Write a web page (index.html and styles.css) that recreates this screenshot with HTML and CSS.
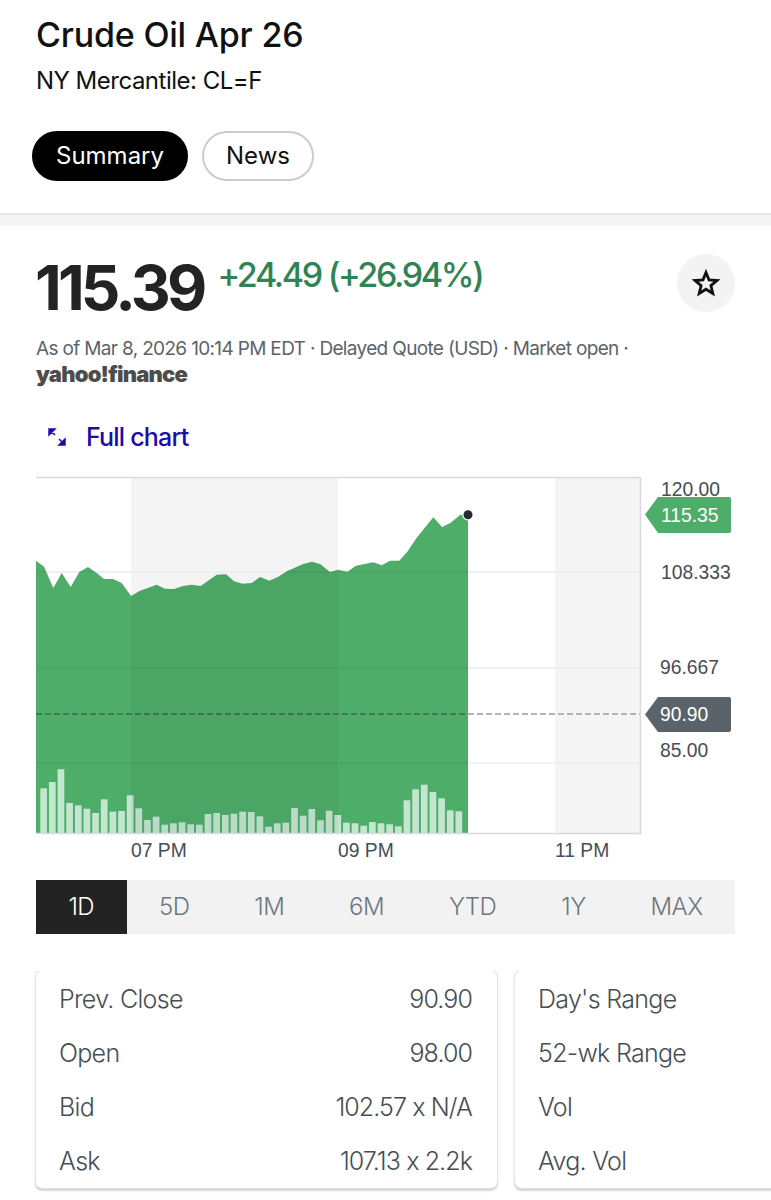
FILE: index.html
```html
<!DOCTYPE html>
<html>
<head>
  <meta charset="UTF-8">
  <title>Crude Oil Apr 26</title>
  <link rel="stylesheet" href="styles.css">
</head>
<body>
  <header class="top">
    <h1>Crude Oil Apr 26</h1>
    <div class="exchange">NY Mercantile: CL=F</div>
    <div class="tabs">
      <span class="tab active">Summary</span>
      <span class="tab">News</span>
    </div>
  </header>

  <main class="quote">
    <div class="price-row">
      <span class="price">115.39</span>
      <span class="change">+24.49 (+26.94%)</span>
      <span class="star">
        <svg width="28" height="28" viewBox="0 0 28 28"><path d="M14 3.500l3 7.400 8 .6-6.100 5.100 1.900 7.800L14 20.200 7.200 24.400l1.900-7.800L3 11.500l8-.6z" fill="none" stroke="#111" stroke-width="2.800"/></svg>
      </span>
    </div>
    <div class="asof">As of Mar 8, 2026 10:14 PM EDT · Delayed Quote (USD) · Market open ·</div>
    <div class="logo">yahoo!finance</div>

    <div class="full-chart">
      <svg width="20" height="20" viewBox="0 0 20 20"><path d="M2 2h6L2 8z M4 4l4 4 M18 18h-6l6-6z M16 16l-4-4" fill="#1d0ca8" stroke="#1d0ca8" stroke-width="1.500"/></svg>
      <span>Full chart</span>
    </div>

    <svg class="chart" width="771" height="400" viewBox="0 465 771 400">
      <defs>
        <clipPath id="areaClip">
          <path d="M36 560.700L44 566.700 53.300 588 61.700 573 70.700 587 79.300 572 88 567 96.700 573 104 579 113 579 121.700 583 131 596 140 590.700 156.700 584.700 165 588.700 174 589 183 586 191.700 584.700 200.700 586 216.700 574.700 226 574.300 234 581.300 242.700 583.700 251.700 583 260 577 269.300 580.700 278.300 576.700 286.700 571.300 303.300 564 312 561.700 320 564 330 572 338.300 569.700 347.300 571.700 356 565.700 373.300 562.300 381.700 565.300 390 560.700 399.300 560.700 407.300 551.700 416.700 537.700 433.300 517.300 442 527 450.700 522.700 460 515 468 514.700V833H36z"/>
        </clipPath>
      </defs>
      <rect x="131" y="478" width="207" height="355" fill="#f4f4f5"/>
      <rect x="555" y="478" width="85" height="355" fill="#f4f4f5"/>
      <g stroke="#ececef" stroke-width="1.500">
        <line x1="36" y1="572" x2="640" y2="572"/>
        <line x1="36" y1="668" x2="640" y2="668"/>
        <line x1="36" y1="763" x2="640" y2="763"/>
      </g>
      <rect x="36" y="478" width="432" height="355" fill="#4fad6a" clip-path="url(#areaClip)"/>
      <g stroke="#000" stroke-opacity=".05" stroke-width="1.500" clip-path="url(#areaClip)">
        <line x1="36" y1="572" x2="468" y2="572"/>
        <line x1="36" y1="668" x2="468" y2="668"/>
        <line x1="36" y1="763" x2="468" y2="763"/>
      </g>
      <line x1="36" y1="714" x2="640" y2="714" stroke="#9a9da1" stroke-width="1.500" stroke-dasharray="6 3"/>
      <line x1="36" y1="714" x2="468" y2="714" stroke="#2d6b42" stroke-width="1.500" stroke-dasharray="6 3"/>
      <g fill="#c3e6cf">
        <rect x="40.300" y="788.300" width="6.700" height="44.700"/>
        <rect x="48.950" y="782" width="6.700" height="51"/>
        <rect x="57.600" y="769.300" width="6.700" height="63.700"/>
        <rect x="66.250" y="803" width="6.700" height="30"/>
        <rect x="74.900" y="805.300" width="6.700" height="27.700"/>
        <rect x="83.550" y="808.700" width="6.700" height="24.300"/>
        <rect x="92.200" y="813" width="6.700" height="20"/>
        <rect x="100.850" y="799.300" width="6.700" height="33.700"/>
        <rect x="109.500" y="811.700" width="6.700" height="21.300"/>
        <rect x="118.150" y="811" width="6.700" height="22"/>
        <rect x="126.800" y="795.300" width="6.700" height="37.700"/>
        <rect x="135.450" y="808.300" width="6.700" height="24.700"/>
        <rect x="144.100" y="820" width="6.700" height="13"/>
        <rect x="152.750" y="816.700" width="6.700" height="16.300"/>
        <rect x="161.400" y="824.700" width="6.700" height="8.300"/>
        <rect x="170.050" y="823.300" width="6.700" height="9.700"/>
        <rect x="178.700" y="822.300" width="6.700" height="10.700"/>
        <rect x="187.350" y="824.300" width="6.700" height="8.700"/>
        <rect x="196" y="824.700" width="6.700" height="8.300"/>
        <rect x="204.650" y="814" width="6.700" height="19"/>
        <rect x="213.300" y="813" width="6.700" height="20"/>
        <rect x="221.950" y="815" width="6.700" height="18"/>
        <rect x="230.600" y="813.700" width="6.700" height="19.300"/>
        <rect x="239.250" y="811.700" width="6.700" height="21.300"/>
        <rect x="247.900" y="812" width="6.700" height="21"/>
        <rect x="256.550" y="816.300" width="6.700" height="16.700"/>
        <rect x="265.200" y="826.700" width="6.700" height="6.300"/>
        <rect x="273.850" y="823.300" width="6.700" height="9.700"/>
        <rect x="282.500" y="822.700" width="6.700" height="10.300"/>
        <rect x="291.150" y="808" width="6.700" height="25"/>
        <rect x="299.800" y="815.700" width="6.700" height="17.300"/>
        <rect x="308.450" y="809" width="6.700" height="24"/>
        <rect x="317.100" y="820.300" width="6.700" height="12.700"/>
        <rect x="325.750" y="810.700" width="6.700" height="22.300"/>
        <rect x="334.400" y="815" width="6.700" height="18"/>
        <rect x="343.050" y="822.700" width="6.700" height="10.300"/>
        <rect x="351.700" y="823.300" width="6.700" height="9.700"/>
        <rect x="360.350" y="825.700" width="6.700" height="7.300"/>
        <rect x="369" y="822" width="6.700" height="11"/>
        <rect x="377.650" y="823.300" width="6.700" height="9.700"/>
        <rect x="386.300" y="824.300" width="6.700" height="8.700"/>
        <rect x="394.950" y="826.300" width="6.700" height="6.700"/>
        <rect x="403.600" y="800.300" width="6.700" height="32.700"/>
        <rect x="412.250" y="789.300" width="6.700" height="43.700"/>
        <rect x="420.900" y="784.700" width="6.700" height="48.300"/>
        <rect x="429.550" y="792" width="6.700" height="41"/>
        <rect x="438.200" y="798.300" width="6.700" height="34.700"/>
        <rect x="446.850" y="810.300" width="6.700" height="22.700"/>
        <rect x="455.500" y="811.300" width="6.700" height="21.700"/>
      </g>
      <rect x="131" y="478" width="207" height="355" fill="#000" opacity=".045" clip-path="url(#areaClip)"/>
      <path d="M36 477.500H640.500V833.500H36" fill="none" stroke="#d9d9df" stroke-width="1.500"/>
      <circle cx="468" cy="514.700" r="5.800" fill="#fff"/>
      <circle cx="468" cy="514.700" r="4.500" fill="#232a31"/>

      <g class="axis">
        <text x="661" y="496">120.00</text>
        <text x="661" y="579">108.333</text>
        <text x="660" y="674">96.667</text>
        <text x="660" y="757">85.00</text>
      </g>
      <path d="M645 514.500L658 497H729a2 2 0 0 1 2 2V531a2 2 0 0 1-2 2H658z" fill="#4fad6a"/>
      <path d="M645 714.500L658 697H729a2 2 0 0 1 2 2V730a2 2 0 0 1-2 2H658z" fill="#5b636a"/>
      <g class="axis tag">
        <text x="661" y="522">115.35</text>
        <text x="660" y="721">90.90</text>
      </g>
      <g class="axis">
        <text x="131" y="857">07 PM</text>
        <text x="338" y="857">09 PM</text>
        <text x="555" y="857">11 PM</text>
      </g>
    </svg>

    <div class="ranges">
      <span class="range active">1D</span>
      <span class="range">5D</span>
      <span class="range">1M</span>
      <span class="range">6M</span>
      <span class="range">YTD</span>
      <span class="range">1Y</span>
      <span class="range">MAX</span>
    </div>

    <div class="cards">
      <div class="card">
        <div class="row"><span>Prev. Close</span><span class="val">90.90</span></div>
        <div class="row"><span>Open</span><span class="val">98.00</span></div>
        <div class="row"><span>Bid</span><span class="val">102.57 x N/A</span></div>
        <div class="row"><span>Ask</span><span class="val">107.13 x 2.2k</span></div>
      </div>
      <div class="card">
        <div class="row"><span>Day's Range</span></div>
        <div class="row"><span>52-wk Range</span></div>
        <div class="row"><span>Vol</span></div>
        <div class="row"><span>Avg. Vol</span></div>
      </div>
    </div>
  </main>
</body>
</html>
```

FILE: styles.css
```css
body {
  margin: 0;
  font-family: Inter, "Noto Sans", sans-serif;
  background-color: #fff;
  color: #111;
}
.top {
  height: 215px;
  padding: 15px 36px 0;
  box-sizing: border-box;
  border-bottom: 2px solid #e6e6ea;
}
h1 {
  margin: 0;
  font-size: 34px;
  line-height: 40px;
  font-weight: 500;
  letter-spacing: -0.200px;
}
.exchange {
  margin-top: 11px;
  font-size: 24px;
  line-height: 30px;
  letter-spacing: -0.500px;
}
.tabs {
  display: flex;
  gap: 14px;
  margin: 35px 0 0 -4px;
}
.tab {
  height: 50px;
  box-sizing: border-box;
  padding: 0 22px;
  border: 2px solid #ccc;
  border-radius: 25px;
  font-size: 24px;
  line-height: 46px;
}
.tab.active {
  background-color: #000;
  border-color: #000;
  color: #fff;
}
.quote {
  border-top: 11px solid #f5f5f7;
  padding: 0 36px;
}
.price-row {
  display: flex;
  align-items: flex-start;
  height: 85px;
  padding-top: 28px;
}
.price {
  margin-left: -1px;
  font-size: 62px;
  line-height: 68px;
  font-weight: 700;
  letter-spacing: -3.800px;
  color: #232323;
}
.change {
  margin: 0 0 0 14px;
  font-size: 34px;
  line-height: 42px;
  font-weight: 500;
  letter-spacing: -2.300px;
  color: #2f8455;
}
.star {
  margin-left: auto;
  width: 58px;
  height: 58px;
  border-radius: 50%;
  background-color: #f3f3f3;
  display: flex;
  align-items: center;
  justify-content: center;
}
.asof {
  margin-top: -2px;
  font-size: 19px;
  line-height: 24px;
  letter-spacing: -0.660px;
  color: #5b636a;
  white-space: nowrap;
}
.logo {
  font-size: 22px;
  line-height: 26px;
  font-weight: 900;
  letter-spacing: -0.800px;
  color: #4c4c4c;
}
.full-chart {
  display: flex;
  align-items: center;
  gap: 19px;
  margin: 35px 0 0 11px;
  height: 30px;
  padding-bottom: 1px;
  color: #1d0ca8;
  font-size: 25px;
  font-weight: 500;
  letter-spacing: -0.800px;
}
.chart {
  display: block;
  margin: 12px 0 0 -36px;
}
.axis text {
  font-family: "Liberation Sans", Arial, sans-serif;
  font-size: 19.300px;
  fill: #464e56;
}
.axis.tag text {
  fill: #fff;
}
.ranges {
  display: flex;
  width: 699px;
  margin-top: 15px;
  background-color: #f2f2f2;
}
.range {
  flex: 1 1 auto;
  height: 54px;
  line-height: 54px;
  text-align: center;
  font-size: 24px;
  font-weight: 300;
  letter-spacing: -0.500px;
  color: #6e7780;
}
.range.active {
  background-color: #232323;
  color: #fff;
}
.cards {
  display: flex;
  gap: 18px;
  margin: 37px 0 0 -36px;
  width: 771px;
  box-sizing: border-box;
  padding: 0 0 8px 36px;
  overflow: hidden;
}
.card {
  flex: 0 0 461px;
  height: 217px;
  box-sizing: border-box;
  padding: 1px 25px 0 23px;
  border-radius: 6px;
  box-shadow: 0 0 0 1px #e4e4e4, 0 2px 3px rgba(0,0,0,0.3);
}
.row {
  display: flex;
  justify-content: space-between;
  height: 54px;
  line-height: 54px;
  font-size: 25px;
  font-weight: 300;
  letter-spacing: -0.700px;
  color: #464e56;
}
.val {
  letter-spacing: -0.900px;
}
```
